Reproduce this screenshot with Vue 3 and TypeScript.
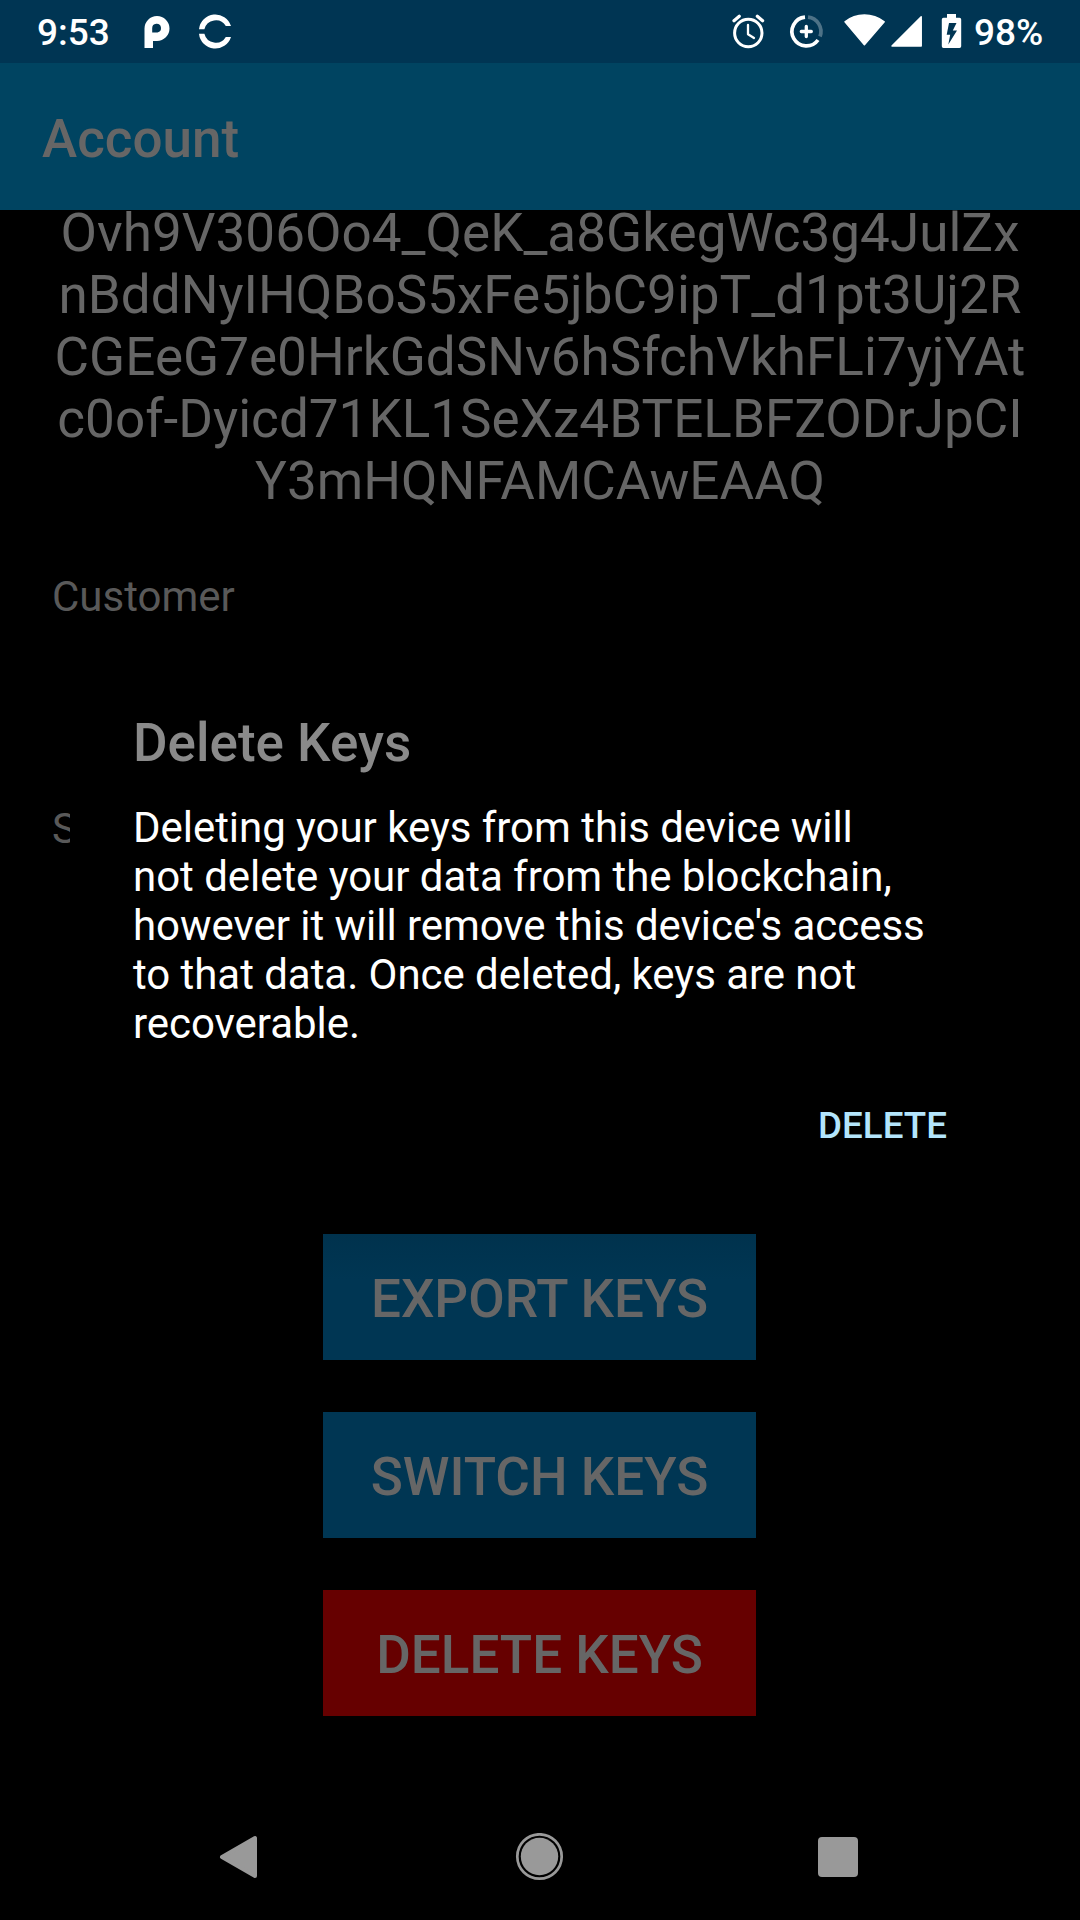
<script setup lang="ts">
const keyLines: string[] = [
  'Ovh9V306Oo4_QeK_a8GkegWc3g4JulZx',
  'nBddNyIHQBoS5xFe5jbC9ipT_d1pt3Uj2R',
  'CGEeG7e0HrkGdSNv6hSfchVkhFLi7yjYAt',
  'c0of-Dyicd71KL1SeXz4BTELBFZODrJpCI',
  'Y3mHQNFAMCAwEAAQ',
]

const messageLines: string[] = [
  'Deleting your keys from this device will',
  'not delete your data from the blockchain,',
  "however it will remove this device's access",
  'to that data. Once deleted, keys are not',
  'recoverable.',
]

const actions: { label: string; kind: string }[] = [
  { label: 'EXPORT KEYS', kind: 'shaded' },
  { label: 'SWITCH KEYS', kind: 'plain' },
  { label: 'DELETE KEYS', kind: 'danger' },
]
</script>

<template>
  <div class="screen">
    <header class="status">
      <span class="clock">9:53</span>
      <svg class="notif" width="100" height="63" viewBox="140 0 100 63">
        <path fill="#fff" fill-rule="evenodd" d="M144.500 48V28.500a12.500 12.500 0 1 1 12.500 12.500H153V48ZM152.200 32.500H157.500a4.400 4.400 0 1 0-5.300-4.200Z" />
        <path fill="#fff" d="M199 29.200A16.400 16.400 0 0 1 231 26H225.800A11.700 11.700 0 0 0 204.400 29.200ZM199 33.800A16.400 16.400 0 0 0 231 37H225.800A11.700 11.700 0 0 1 204.400 33.800Z" />
      </svg>
      <svg class="system" width="240" height="63" viewBox="728 0 240 63">
        <g fill="none" stroke="#fff" stroke-linecap="round">
          <circle cx="748.300" cy="33" r="13.700" stroke-width="3" />
          <path stroke-width="2.300" stroke-linejoin="round" d="M748 25v9.300l6 3.700" />
          <path stroke-width="3.200" d="M734 20.700l5.300-4.500M762.600 20.700l-5.300-4.500" />
          <path stroke-width="3.300" d="M806.300 26.500v10M801.300 31.500h10" />
          <path stroke-width="3.700" stroke-linecap="butt" d="M805 17.200A14.400 14.400 0 1 0 818 40" />
          <path stroke-width="3.700" stroke-linecap="butt" stroke-opacity=".3" d="M808 17.100A14.400 14.400 0 0 1 820 36.500" />
        </g>
        <path fill="#fff" stroke="#fff" stroke-width="1.500" stroke-linejoin="round" d="M864.400 44.800L845 21.800Q853.500 15 864.400 15T884.200 21.800Z" />
        <path fill="#fff" stroke="#fff" stroke-width="1.500" stroke-linejoin="round" d="M892 46L921.200 16.800V46Z" />
        <path fill="#fff" fill-rule="evenodd" d="M947 14h9v3.700h3.500q1.700 0 1.700 1.700v26.900q0 1.700-1.700 1.700h-16q-1.700 0-1.700-1.700V19.400q0-1.700 1.700-1.700h3.500ZM949 23L946.700 34.700H950.200L948.300 44.500L957 30.500H952.800L956.500 23Z" />
      </svg>
      <span class="percent">98%</span>
    </header>

    <div class="toolbar"><h1>Account</h1></div>

    <main class="content">
      <div class="key">
        <div v-for="line in keyLines" :key="line">{{ line }}</div>
      </div>
      <div class="field customer">Customer</div>
      <div class="field second">S</div>
      <div class="actions">
        <button v-for="a in actions" :key="a.label" :class="a.kind">{{ a.label }}</button>
      </div>
    </main>

    <footer class="nav">
      <svg width="640" height="48" viewBox="219 1833 640 48">
        <path fill="#999" stroke="#999" stroke-width="4" stroke-linejoin="round" d="M222 1857L255 1838V1876Z" />
        <circle cx="539.500" cy="1856.500" r="22.200" fill="none" stroke="#999" stroke-width="2.700" />
        <circle cx="539.500" cy="1856.500" r="18.700" fill="#999" />
        <rect x="818" y="1837" width="40" height="40" rx="4" fill="#999" />
      </svg>
    </footer>

    <section class="dialog">
      <h2>Delete Keys</h2>
      <div class="message">
        <div v-for="line in messageLines" :key="line">{{ line }}</div>
      </div>
      <div class="confirm">DELETE</div>
    </section>
  </div>
</template>

<style>
html,
body {
  margin: 0;
  background: #000;
}
</style>

<style scoped>
.screen {
  position: relative;
  display: flex;
  flex-direction: column;
  width: 1080px;
  height: 1920px;
  overflow: hidden;
  background: #000;
  color: #666;
  font-family: Roboto, sans-serif;
}
h1,
h2 {
  margin: 0;
  font-size: 53px;
  font-weight: 500;
}
.status {
  display: flex;
  height: 63px;
  flex: none;
  background: #003553;
  color: #fff;
  font-size: 37px;
  font-weight: 500;
  line-height: 66px;
}
.clock {
  width: 103px;
  padding-left: 37px;
}
.system {
  margin-left: 488px;
}
.percent {
  padding-left: 6px;
}
.toolbar {
  height: 147px;
  flex: none;
  padding-left: 42px;
  box-sizing: border-box;
  background: #004461;
  line-height: 152px;
}
.content {
  flex: 1;
  display: flex;
  flex-direction: column;
}
.key {
  height: 311px;
  margin-top: -9px;
  padding-top: 1px;
  box-sizing: border-box;
  text-align: center;
  font-size: 53px;
  line-height: 62px;
  letter-spacing: 0.03px;
  white-space: nowrap;
}
.field {
  padding-left: 52px;
  font-size: 42px;
  line-height: 50px;
  color: #595959;
}
.customer {
  margin-top: 60px;
}
.second {
  margin-top: 182px;
}
.actions {
  display: flex;
  flex-direction: column;
  align-items: center;
  gap: 52px;
  margin-top: 380px;
}
button {
  width: 433px;
  height: 126px;
  margin: 0 1px 0 0;
  padding: 4px 0 0;
  border: 0;
  background: #003653;
  color: #666;
  font: 500 53px/62px Roboto, sans-serif;
}
.shaded {
  background: linear-gradient(#00324d, #003653 36%);
}
.danger {
  background: #600;
}
.nav {
  display: flex;
  height: 87px;
  flex: none;
  padding-left: 219px;
}
.dialog {
  position: absolute;
  left: 70px;
  top: 682px;
  width: 940px;
  height: 520px;
  box-sizing: border-box;
  padding: 30px 63px 0;
  background: #000;
}
h2 {
  color: #8a8a8a;
  line-height: 62px;
}
.message {
  margin-top: 29px;
  color: #fff;
  font-size: 42px;
  line-height: 49px;
  letter-spacing: -0.045px;
  white-space: nowrap;
}
.confirm {
  margin-top: 56px;
  text-align: right;
  color: #b3e5fc;
  font-size: 36.75px;
  font-weight: 500;
  line-height: 44px;
}
</style>
